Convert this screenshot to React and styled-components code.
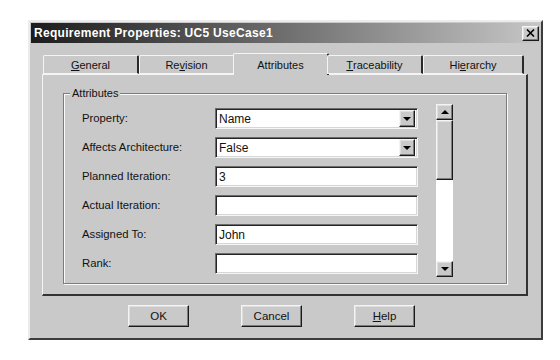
import React from 'react'
import styled, { createGlobalStyle, css } from 'styled-components'

const GlobalStyle = createGlobalStyle`
  html, body {
    margin: 0;
    padding: 0;
    background: #fff;
  }
  body {
    font-family: "Liberation Sans", Arial, sans-serif;
    font-size: 11px;
    color: #111;
  }
`

const face = '#c9c9c9'

const raised = css`
  border-style: solid;
  border-width: 1px;
  border-color: #f4f4f4 #1a1a1a #1a1a1a #f4f4f4;
  box-shadow: inset -1px -1px #7c7c7c, inset 1px 1px #dedede;
`

const sunken = css`
  border-style: solid;
  border-width: 1px;
  border-color: #6c6c6c #f6f6f6 #f6f6f6 #6c6c6c;
  box-shadow: inset 1px 1px #262626, inset -1px -1px #d6d6d6;
`

const Dialog = styled.div`
  box-sizing: border-box;
  width: 515px;
  height: 320px;
  margin: 20px 0 0 28px;
  padding: 1px;
  background: ${face};
  border-style: solid;
  border-width: 2px;
  border-color: #ececec #3c3c3c #3c3c3c #ececec;
  display: flex;
  flex-direction: column;
`

const TitleBar = styled.div`
  height: 20px;
  display: flex;
  align-items: center;
  justify-content: space-between;
  padding: 0 1px 0 3px;
  background: linear-gradient(90deg, #1c1c1c 0%, #6f6f6f 50%, #c6c6c6 100%);
`

const Title = styled.span`
  color: #fff;
  font-weight: bold;
  font-size: 12px;
  letter-spacing: 0.3px;
`

const CloseButton = styled.div`
  ${raised};
  box-sizing: border-box;
  width: 17px;
  height: 15px;
  background: ${face};
  display: flex;
  align-items: center;
  justify-content: center;
`

const Body = styled.div`
  padding: 10px 12px 0 11px;
  display: flex;
  flex-direction: column;
`

const TabStrip = styled.div`
  display: flex;
  align-items: flex-end;
  height: 21px;
  padding-left: 1px;
  position: relative;
  z-index: 1;
`

const Tab = styled.div`
  box-sizing: border-box;
  width: ${p => p.$w}px;
  height: ${p => (p.$active ? 22 : 19)}px;
  margin: ${p => (p.$active ? '0 -2px -1px -2px' : '0')};
  background: ${face};
  border-style: solid;
  border-width: 1px 2px ${p => (p.$active ? 0 : 1)}px 1px;
  border-color: #f4f4f4 #2a2a2a ${p => (p.$active ? face : '#f4f4f4')} #f4f4f4;
  border-radius: 2px 2px 0 0;
  display: flex;
  align-items: center;
  justify-content: center;
  padding-top: ${p => (p.$active ? 1 : 0)}px;
`

const Panel = styled.div`
  box-sizing: border-box;
  height: 222px;
  width: 486px;
  background: ${face};
  border-style: solid;
  border-width: 1px 2px 2px 1px;
  border-color: #f4f4f4 #333 #333 #f4f4f4;
  padding: 18px 19px 10px 20px;
`

const GroupBox = styled.div`
  position: relative;
  box-sizing: border-box;
  height: 100%;
  border: 1px solid #7c7c7c;
  box-shadow: inset 1px 1px #fafafa, 1px 1px #fafafa;
  padding: 10px 0 0 18px;
  display: flex;
`

const Legend = styled.span`
  position: absolute;
  top: -7px;
  left: 6px;
  padding: 0 2px;
  background: ${face};
  line-height: 13px;
`

const Rows = styled.div`
  display: flex;
  flex-direction: column;
  gap: 8px;
  padding-top: 4px;
  width: 336px;
`

const Row = styled.div`
  display: flex;
  align-items: center;
  height: 21px;
`

const Label = styled.span`
  width: 133px;
  flex: none;
  margin-top: -2px;
  font-size: 11.3px;
`

const Field = styled.div`
  ${sunken};
  box-sizing: border-box;
  width: 203px;
  height: 21px;
  background: #fff;
  display: flex;
  align-items: center;
  padding: 0 2px 0 3px;
  font-size: 12px;
`

const FieldText = styled.span`
  flex: 1;
`

const DropButton = styled.div`
  ${raised};
  box-sizing: border-box;
  width: 16px;
  height: 17px;
  background: ${face};
  display: flex;
  align-items: center;
  justify-content: center;
`

const Arrow = styled.div`
  width: 0;
  height: 0;
  border-left: 4px solid transparent;
  border-right: 4px solid transparent;
  ${p => (p.$up ? 'border-bottom: 4px solid #000;' : 'border-top: 4px solid #000;')}
`

const ScrollBar = styled.div`
  margin-left: 18px;
  width: 17px;
  height: 173px;
  display: flex;
  flex-direction: column;
  background: #fff;
`

const ScrollButton = styled.div`
  ${raised};
  box-sizing: border-box;
  height: 16px;
  background: ${face};
  display: flex;
  align-items: center;
  justify-content: center;
`

const Thumb = styled.div`
  ${raised};
  box-sizing: border-box;
  height: 60px;
  background: ${face};
`

const Track = styled.div`
  flex: 1;
  background: #fff;
`

const ButtonRow = styled.div`
  display: flex;
  gap: 52px;
  padding: 9px 0 0 86px;
`

const PushButton = styled.div`
  ${raised};
  box-sizing: border-box;
  width: 61px;
  height: 22px;
  background: ${face};
  display: flex;
  align-items: center;
  justify-content: center;
  font-size: 11.5px;
`

const U = styled.span`
  text-decoration: underline;
`

const tabs = [
  { w: 96, label: <><U>G</U>eneral</> },
  { w: 96, label: <>Re<U>v</U>ision</> },
  { w: 96, label: <>Attributes</>, active: true },
  { w: 96, label: <><U>T</U>raceability</> },
  { w: 101, label: <>Hi<U>e</U>rarchy</> },
]

const fields = [
  { label: 'Property:', value: 'Name', drop: true },
  { label: 'Affects Architecture:', value: 'False', drop: true },
  { label: 'Planned Iteration:', value: '3' },
  { label: 'Actual Iteration:', value: '' },
  { label: 'Assigned To:', value: 'John' },
  { label: 'Rank:', value: '' },
]

export default function App() {
  return (
    <>
      <GlobalStyle />
      <Dialog>
        <TitleBar>
          <Title>Requirement Properties: UC5 UseCase1</Title>
          <CloseButton>
            <svg width="9" height="8" viewBox="0 0 9 8">
              <path d="M1 0.5 L8 7.5 M8 0.5 L1 7.5" stroke="#000" strokeWidth="1.6" />
            </svg>
          </CloseButton>
        </TitleBar>
        <Body>
          <TabStrip>
            {tabs.map((t, i) => (
              <Tab key={i} $w={t.w} $active={t.active}>{t.label}</Tab>
            ))}
          </TabStrip>
          <Panel>
            <GroupBox>
              <Legend>Attributes</Legend>
              <Rows>
                {fields.map(f => (
                  <Row key={f.label}>
                    <Label>{f.label}</Label>
                    <Field>
                      <FieldText>{f.value}</FieldText>
                      {f.drop && (
                        <DropButton><Arrow /></DropButton>
                      )}
                    </Field>
                  </Row>
                ))}
              </Rows>
              <ScrollBar>
                <ScrollButton><Arrow $up /></ScrollButton>
                <Thumb />
                <Track />
                <ScrollButton><Arrow /></ScrollButton>
              </ScrollBar>
            </GroupBox>
          </Panel>
          <ButtonRow>
            <PushButton>OK</PushButton>
            <PushButton>Cancel</PushButton>
            <PushButton><U>H</U>elp</PushButton>
          </ButtonRow>
        </Body>
      </Dialog>
    </>
  )
}
